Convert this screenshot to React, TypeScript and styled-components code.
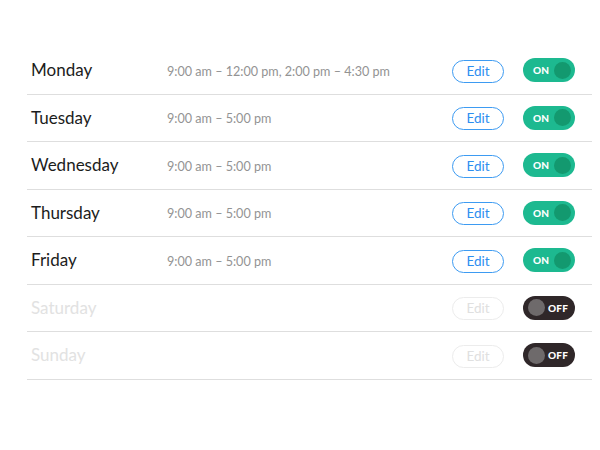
import React from 'react'
import styled, { createGlobalStyle } from 'styled-components'

const GlobalStyle = createGlobalStyle`
  body {
    margin: 0;
    background: #ffffff;
    font-family: Lato, 'Open Sans', 'Liberation Sans', sans-serif;
  }
`

type Day = { name: string; hours: string; on: boolean }

const days: Day[] = [
  { name: 'Monday', hours: '9:00 am – 12:00 pm, 2:00 pm – 4:30 pm', on: true },
  { name: 'Tuesday', hours: '9:00 am – 5:00 pm', on: true },
  { name: 'Wednesday', hours: '9:00 am – 5:00 pm', on: true },
  { name: 'Thursday', hours: '9:00 am – 5:00 pm', on: true },
  { name: 'Friday', hours: '9:00 am – 5:00 pm', on: true },
  { name: 'Saturday', hours: '', on: false },
  { name: 'Sunday', hours: '', on: false },
]

const App = () => {
  return (
    <>
      <GlobalStyle />
      <Schedule>
        {days.map((d) => (
          <Row key={d.name}>
            <DayName $on={d.on}>{d.name}</DayName>
            <Hours>{d.hours}</Hours>
            <EditButton $on={d.on}>Edit</EditButton>
            <Toggle $on={d.on}>
              {d.on ? (
                <>
                  <ToggleLabel>ON</ToggleLabel>
                  <Knob $on />
                </>
              ) : (
                <>
                  <Knob $on={false} />
                  <ToggleLabel>OFF</ToggleLabel>
                </>
              )}
            </Toggle>
          </Row>
        ))}
      </Schedule>
    </>
  )
}

const Schedule = styled.div`
  margin: 47px 0 0 27px;
  width: 565px;
`

const Row = styled.div`
  box-sizing: border-box;
  height: 47.5px;
  display: grid;
  grid-template-columns: 136px 1fr 52px 52px;
  column-gap: 19px;
  align-items: center;
  padding: 0 17px 0 4px;
  border-bottom: 1px solid #dedede;
`

const DayName = styled.div<{ $on: boolean }>`
  font-size: 17px;
  color: ${(p) => (p.$on ? '#1c1c1c' : '#e2e2e2')};
  margin-top: -1px;
`

const Hours = styled.div`
  font-size: 12.6px;
  color: #939393;
  margin: 2px 0 0 -19px;
  white-space: nowrap;
`

const EditButton = styled.button<{ $on: boolean }>`
  box-sizing: border-box;
  width: 52px;
  height: 23px;
  padding: 0;
  border-radius: 12px;
  background: #fff;
  border: 1px solid ${(p) => (p.$on ? '#3d9bf2' : '#ececec')};
  color: ${(p) => (p.$on ? '#2d8ef0' : '#e0e0e0')};
  font-family: Lato, 'Open Sans', 'Liberation Sans', sans-serif;
  font-size: 13.5px;
  line-height: 21px;
  margin-top: 2px;
`

const Toggle = styled.div<{ $on: boolean }>`
  box-sizing: border-box;
  width: 52px;
  height: 24px;
  border-radius: 12px;
  background: ${(p) => (p.$on ? '#1db990' : '#2f2729')};
  display: flex;
  align-items: center;
  justify-content: space-between;
  padding: ${(p) => (p.$on ? '0 4px 0 10px' : '0 7px 0 5px')};
`

const ToggleLabel = styled.span`
  color: #fff;
  font-family: Lato, 'Liberation Sans', sans-serif;
  font-weight: 900;
  font-size: 10px;
  letter-spacing: 0.2px;
`

const Knob = styled.span<{ $on: boolean }>`
  width: 17px;
  height: 17px;
  border-radius: 50%;
  background: ${(p) => (p.$on ? '#13996f' : '#6e6a6b')};
`

export default App
